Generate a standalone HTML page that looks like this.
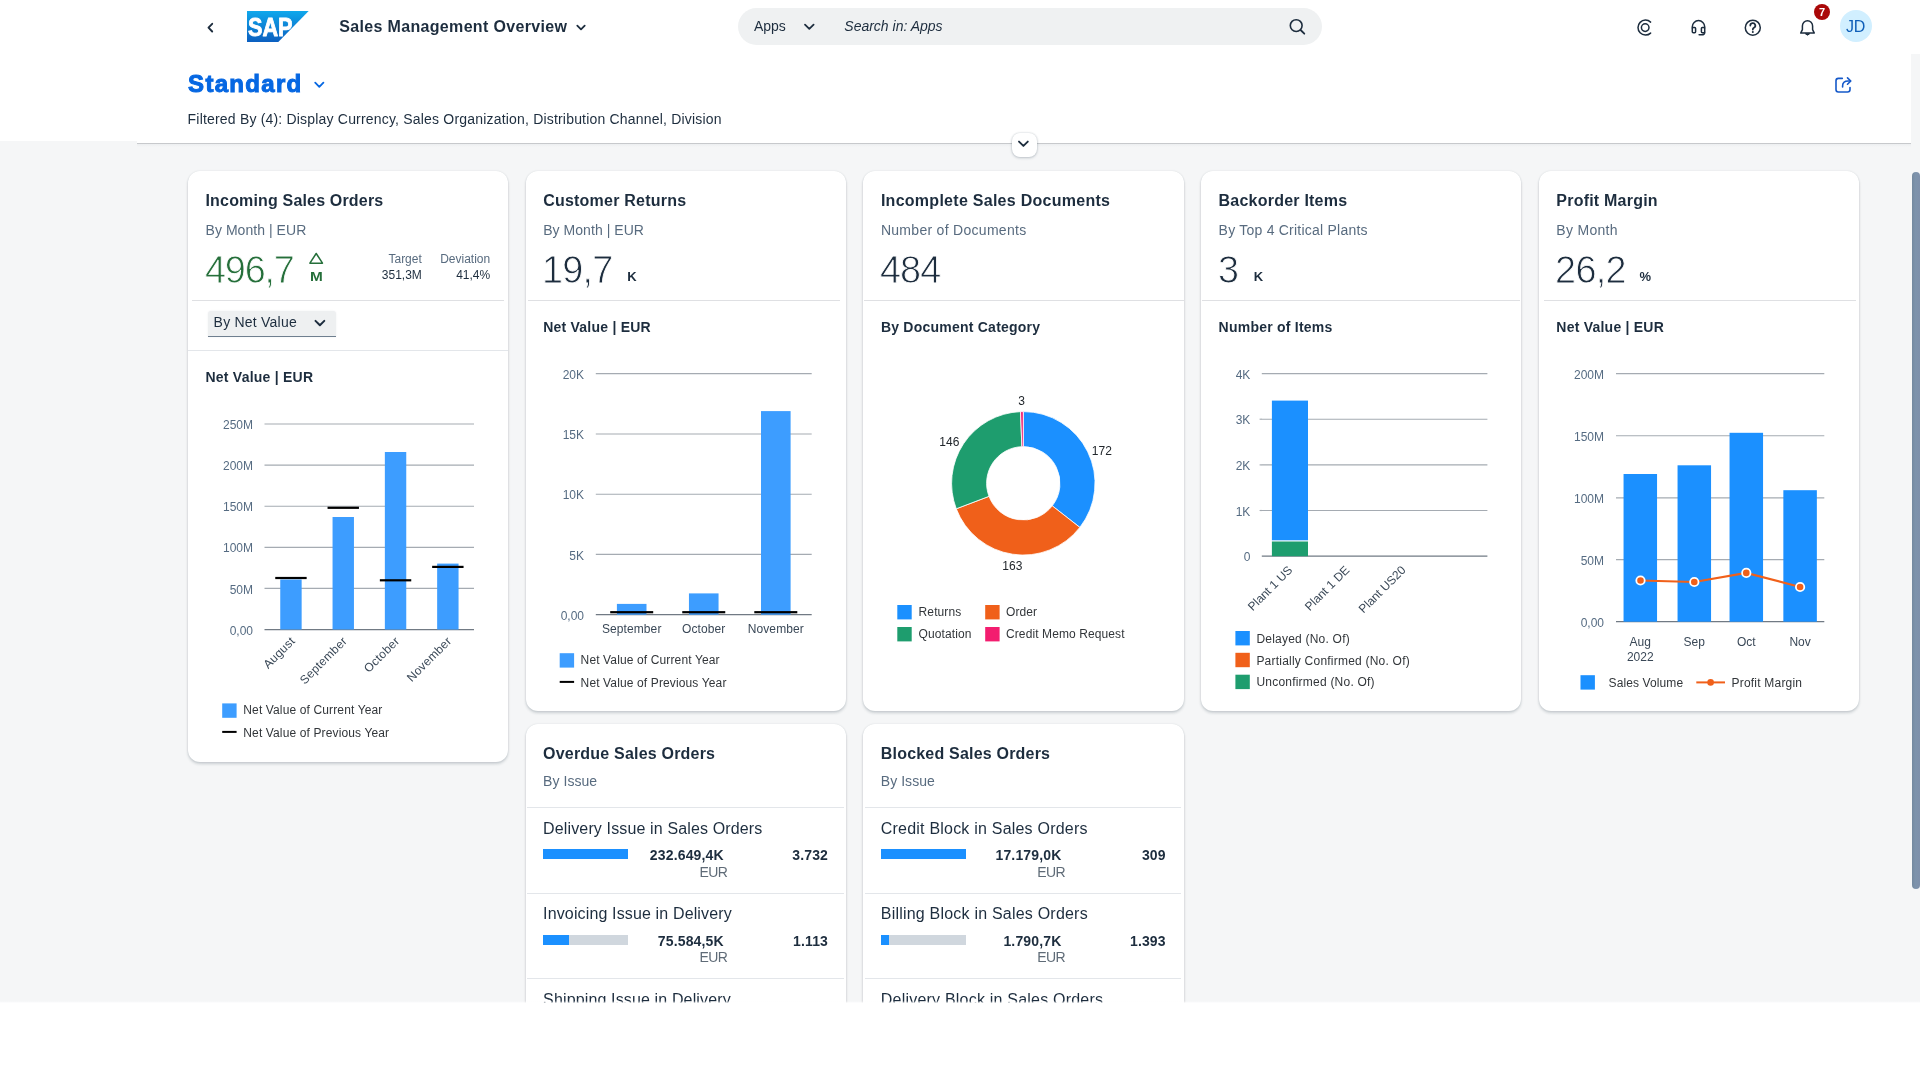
<!DOCTYPE html>
<html lang="en"><head><meta charset="utf-8"><title>Sales Management Overview</title>
<style>
html,body{margin:0;padding:0;overflow:hidden;}
body{width:1920px;height:1080px;overflow:hidden;background:#f5f6f7;position:relative;font-family:"Liberation Sans",sans-serif;}
.t{position:absolute;white-space:nowrap;}
.b{position:absolute;box-sizing:border-box;}
.card{position:absolute;box-sizing:border-box;background:#fff;border-radius:12px;box-shadow:0 0 2px rgba(34,53,72,.13),0 2px 3px rgba(34,53,72,.2);}
.hr{position:absolute;height:1px;background:#e3e6ea;}
svg{position:absolute;left:0;top:0;overflow:visible;}
.lt{-webkit-text-stroke:0.85px #fff;}
#root{position:absolute;left:0;top:0;width:1920px;height:1080px;overflow:hidden;will-change:transform;}
</style></head><body><div id="root">

<div class="b" style="left:0px;top:0px;width:1920px;height:141px;background:#fff;"></div>
<div class="b" style="left:137px;top:141px;width:1773.5px;height:2px;background:#fff;"></div>
<div class="b" style="left:1910.5px;top:53.7px;width:9.5px;height:100px;background:#f5f6f7;"></div>
<div class="b" style="left:137px;top:143px;width:1773.5px;height:1px;background:#c7c9cc;"></div>
<div class="b" style="left:137px;top:144px;width:1773.5px;height:3px;background:linear-gradient(#eceef0,#f5f6f7);"></div>
<div class="t" style="top:19.26px;font-size:16px;line-height:16px;color:#1d2d3e;font-weight:700;letter-spacing:0.33px;left:339.30px;">Sales Management Overview</div>
<div class="b" style="left:738px;top:8px;width:584px;height:37px;background:#eff1f2;border-radius:18.5px;"></div>
<div class="t" style="top:19.05px;font-size:14px;line-height:14px;color:#1d2d3e;left:753.90px;">Apps</div>
<div class="t" style="top:19.05px;font-size:14px;line-height:14px;color:#1d2d3e;left:844.30px;font-style:italic;">Search in: Apps</div>
<div class="b" style="left:1839.5px;top:10.3px;width:32px;height:32px;background:#d1efff;border-radius:50%;"></div>
<div class="t" style="top:18.76px;font-size:16px;line-height:16px;color:#0f5fb8;letter-spacing:-0.3px;left:1655.60px;width:400px;text-align:center;">JD</div>
<div class="b" style="left:1814px;top:4px;width:16px;height:16px;background:#aa0808;border-radius:50%;"></div>
<div class="t" style="top:6.59px;font-size:11px;line-height:11px;color:#fff;font-weight:700;left:1622.00px;width:400px;text-align:center;">7</div>
<div class="t" style="top:72.38px;font-size:24px;line-height:24px;color:#0667e2;font-weight:700;letter-spacing:1.3px;left:188.10px;-webkit-text-stroke:1px #0667e2;">Standard</div>
<div class="t" style="top:111.75px;font-size:14px;line-height:14px;color:#1d2d3e;letter-spacing:0.19px;left:187.60px;">Filtered By (4): Display Currency, Sales Organization, Distribution Channel, Division</div>
<div class="b" style="left:1011.5px;top:132.5px;width:25px;height:24px;background:#fff;border-radius:8px;box-shadow:0 0 2px rgba(34,53,72,.2),0 1px 3px rgba(34,53,72,.22);"></div>
<svg width="1920" height="160" viewBox="0 0 1920 160" fill="none" stroke-linecap="round" stroke-linejoin="round">
<defs><linearGradient id="sapg" x1="0" y1="0" x2="0" y2="1"><stop offset="0" stop-color="#0fa8ec"/><stop offset="1" stop-color="#0b5fc0"/></linearGradient></defs>
<!-- back -->
<path d="M212.2 23.8 L208.5 27.65 L212.2 31.5" stroke="#1d2d3e" stroke-width="1.9"/>
<!-- SAP logo -->
<path d="M247 11 H308.7 L278.3 42 H247 Z" fill="url(#sapg)"/>
<text x="248" y="36" font-family="Liberation Sans, sans-serif" font-weight="700" font-size="25.5" fill="#fff" stroke="#fff" stroke-width="0.9" textLength="44.5" lengthAdjust="spacingAndGlyphs">SAP</text>
<!-- title chevron -->
<path d="M577.3 25.6 L581 29.3 L584.7 25.6" stroke="#1d2d3e" stroke-width="1.8"/>
<!-- search: apps chevron + magnifier -->
<path d="M805 24.7 L809.3 28.9 L813.6 24.7" stroke="#1d2d3e" stroke-width="1.8"/>
<circle cx="1296.2" cy="25.6" r="5.9" stroke="#1d2d3e" stroke-width="1.6"/>
<path d="M1300.6 30 L1304.3 33.7" stroke="#1d2d3e" stroke-width="1.8"/>
<!-- joule / copilot -->
<circle cx="1645.2" cy="27.6" r="3.8" stroke="#1d2d3e" stroke-width="1.5"/>
<path d="M1650.6 22.1 A7.5 7.5 0 1 0 1650.6 33.1" stroke="#1d2d3e" stroke-width="1.5"/>
<!-- headset -->
<path d="M1692.3 28 v-1.2 a6.2 6.2 0 0 1 12.4 0 v1.2" stroke="#1d2d3e" stroke-width="1.5"/>
<rect x="1692.3" y="27.6" width="3.3" height="5.2" rx="1" stroke="#1d2d3e" stroke-width="1.5"/>
<rect x="1701.4" y="27.6" width="3.3" height="5.2" rx="1" stroke="#1d2d3e" stroke-width="1.5"/>
<path d="M1704.7 32.2 q0 2.6 -3 2.6 h-2.6" stroke="#1d2d3e" stroke-width="1.5"/>
<!-- help -->
<circle cx="1752.8" cy="27.7" r="7.5" stroke="#1d2d3e" stroke-width="1.5"/>
<path d="M1750.3 25.6 a2.5 2.5 0 1 1 3.6 2.2 q-1.1 .6 -1.1 1.7" stroke="#1d2d3e" stroke-width="1.75"/>
<circle cx="1752.8" cy="32" r="1" fill="#1d2d3e"/>
<!-- bell -->
<path d="M1800.7 33.1 H1814.3 L1812.6 29.6 V25.9 a5.1 5.1 0 0 0 -10.2 0 V29.6 Z" stroke="#1d2d3e" stroke-width="1.5"/>
<path d="M1805.6 34 q1.9 2.4 3.8 0 Z" fill="#1d2d3e" stroke="#1d2d3e" stroke-width="1"/>
<!-- variant chevron -->
<path d="M315.2 82.7 L319.3 86.8 L323.4 82.7" stroke="#0667e2" stroke-width="1.8"/>
<!-- share -->
<path d="M1842.3 78.4 H1838.4 a2.4 2.4 0 0 0 -2.4 2.4 V89.6 a2.4 2.4 0 0 0 2.4 2.4 H1847.6 a2.4 2.4 0 0 0 2.4 -2.4 V87.6" stroke="#1559c9" stroke-width="1.6"/>
<path d="M1842.6 87 v-1 q0 -5 5.6 -5 h2" stroke="#1559c9" stroke-width="1.6"/>
<path d="M1847.5 77.9 L1850.8 81 L1847.5 84.2" stroke="#1559c9" stroke-width="1.6"/>
<!-- collapse chevron -->
<path d="M1019 141.6 L1023.4 145.9 L1027.8 141.6" stroke="#1d2d3e" stroke-width="1.9"/>
</svg>

<div class="card" style="left:187.8px;top:171.2px;width:320.6px;height:590.4px;"></div>
<div class="card" style="left:525.5px;top:171.2px;width:320.6px;height:539.4px;"></div>
<div class="card" style="left:863.2px;top:171.2px;width:320.6px;height:539.4px;"></div>
<div class="card" style="left:1200.9px;top:171.2px;width:320.6px;height:539.4px;"></div>
<div class="card" style="left:1538.6px;top:171.2px;width:320.6px;height:539.4px;"></div>
<div class="card" style="left:525.5px;top:723.8px;width:320.6px;height:398.4px;"></div>
<div class="card" style="left:863.2px;top:723.8px;width:320.6px;height:398.4px;"></div>
<div class="t" style="top:193.16px;font-size:16px;line-height:16px;color:#1d2d3e;font-weight:700;letter-spacing:0.17px;left:205.50px;">Incoming Sales Orders</div>
<div class="t" style="top:222.55px;font-size:14px;line-height:14px;color:#586b7f;letter-spacing:0.05px;left:205.50px;">By Month | EUR</div>
<div class="hr" style="left:192px;top:300px;width:312px;background:#dfe0e3;"></div>
<div class="t" style="top:193.16px;font-size:16px;line-height:16px;color:#1d2d3e;font-weight:700;letter-spacing:0.22px;left:543.20px;">Customer Returns</div>
<div class="t" style="top:222.55px;font-size:14px;line-height:14px;color:#586b7f;letter-spacing:0.05px;left:543.20px;">By Month | EUR</div>
<div class="hr" style="left:527.9px;top:300px;width:312.1px;background:#dfe0e3;"></div>
<div class="t" style="top:193.16px;font-size:16px;line-height:16px;color:#1d2d3e;font-weight:700;letter-spacing:0.27px;left:880.90px;">Incomplete Sales Documents</div>
<div class="t" style="top:222.55px;font-size:14px;line-height:14px;color:#586b7f;letter-spacing:0.29px;left:880.90px;">Number of Documents</div>
<div class="hr" style="left:864.1px;top:300px;width:319.9px;background:#dfe0e3;"></div>
<div class="t" style="top:193.16px;font-size:16px;line-height:16px;color:#1d2d3e;font-weight:700;letter-spacing:0.22px;left:1218.60px;">Backorder Items</div>
<div class="t" style="top:222.55px;font-size:14px;line-height:14px;color:#586b7f;letter-spacing:0.23px;left:1218.60px;">By Top 4 Critical Plants</div>
<div class="hr" style="left:1202px;top:300px;width:317.9000000000001px;background:#dfe0e3;"></div>
<div class="t" style="top:193.16px;font-size:16px;line-height:16px;color:#1d2d3e;font-weight:700;letter-spacing:0.22px;left:1556.30px;">Profit Margin</div>
<div class="t" style="top:222.55px;font-size:14px;line-height:14px;color:#586b7f;letter-spacing:0.3px;left:1556.30px;">By Month</div>
<div class="hr" style="left:1544px;top:300px;width:312px;background:#dfe0e3;"></div>
<div class="t lt" style="top:250.60px;font-size:37.8px;line-height:37.8px;color:#256f3a;letter-spacing:-1.15px;left:204.90px;transform:scaleY(1.045);transform-origin:50% 0;">496,7</div>
<div class="t lt" style="top:250.60px;font-size:37.8px;line-height:37.8px;color:#1d2d3e;letter-spacing:-0.75px;left:541.90px;transform:scaleY(1.045);transform-origin:50% 0;">19,7</div>
<div class="t lt" style="top:250.60px;font-size:37.8px;line-height:37.8px;color:#1d2d3e;letter-spacing:-0.9px;left:879.90px;transform:scaleY(1.045);transform-origin:50% 0;">484</div>
<div class="t lt" style="top:250.60px;font-size:37.8px;line-height:37.8px;color:#1d2d3e;left:1217.90px;transform:scaleY(1.045);transform-origin:50% 0;">3</div>
<div class="t lt" style="top:250.60px;font-size:37.8px;line-height:37.8px;color:#1d2d3e;letter-spacing:-0.7px;left:1555.10px;transform:scaleY(1.045);transform-origin:50% 0;">26,2</div>
<div class="t" style="top:270.74px;font-size:12px;line-height:12px;color:#256f3a;font-weight:700;left:309.80px;transform:scaleX(1.28);transform-origin:0 50%;">M</div>
<div class="t" style="top:270.10px;font-size:13px;line-height:13px;color:#1d2d3e;font-weight:700;left:627.20px;">K</div>
<div class="t" style="top:270.10px;font-size:13px;line-height:13px;color:#1d2d3e;font-weight:700;left:1253.80px;">K</div>
<div class="t" style="top:270.10px;font-size:13px;line-height:13px;color:#1d2d3e;font-weight:700;left:1639.50px;">%</div>
<div class="t" style="top:253.14px;font-size:12px;line-height:12px;color:#586b7f;right:1498.20px;">Target</div>
<div class="t" style="top:269.44px;font-size:12px;line-height:12px;color:#1d2d3e;right:1498.20px;">351,3M</div>
<div class="t" style="top:253.14px;font-size:12px;line-height:12px;color:#586b7f;right:1429.80px;">Deviation</div>
<div class="t" style="top:269.44px;font-size:12px;line-height:12px;color:#1d2d3e;right:1429.80px;">41,4%</div>
<div class="b" style="left:208px;top:311.4px;width:127.8px;height:25.6px;background:#eef0f1;border-radius:3px 3px 0 0;border-bottom:1px solid #6f7f8f;box-shadow:0 0 2px rgba(34,53,72,.08);"></div>
<div class="t" style="top:315.25px;font-size:14px;line-height:14px;color:#1d2d3e;letter-spacing:0.22px;left:213.60px;">By Net Value</div>
<div class="hr" style="left:188px;top:350px;width:320.1px;background:#e3e6ea;"></div>
<div class="t" style="top:370.35px;font-size:14px;line-height:14px;color:#1d2d3e;font-weight:700;letter-spacing:0.23px;left:205.50px;">Net Value | EUR</div>
<div class="t" style="top:320.35px;font-size:14px;line-height:14px;color:#1d2d3e;font-weight:700;letter-spacing:0.23px;left:543.20px;">Net Value | EUR</div>
<div class="t" style="top:320.35px;font-size:14px;line-height:14px;color:#1d2d3e;font-weight:700;letter-spacing:0.23px;left:880.90px;">By Document Category</div>
<div class="t" style="top:320.35px;font-size:14px;line-height:14px;color:#1d2d3e;font-weight:700;letter-spacing:0.23px;left:1218.60px;">Number of Items</div>
<div class="t" style="top:320.35px;font-size:14px;line-height:14px;color:#1d2d3e;font-weight:700;letter-spacing:0.23px;left:1556.30px;">Net Value | EUR</div>
<div class="t" style="top:419.14px;font-size:12px;line-height:12px;color:#556b82;right:1667.00px;">250M</div>
<div class="t" style="top:460.24px;font-size:12px;line-height:12px;color:#556b82;right:1667.00px;">200M</div>
<div class="t" style="top:501.34px;font-size:12px;line-height:12px;color:#556b82;right:1667.00px;">150M</div>
<div class="t" style="top:542.44px;font-size:12px;line-height:12px;color:#556b82;right:1667.00px;">100M</div>
<div class="t" style="top:583.54px;font-size:12px;line-height:12px;color:#556b82;right:1667.00px;">50M</div>
<div class="t" style="top:624.64px;font-size:12px;line-height:12px;color:#556b82;right:1667.00px;">0,00</div>
<div class="t" style="right:1627.25px;top:633.30px;font-size:12px;line-height:12px;letter-spacing:0.25px;color:#3a4857;transform-origin:100% 50%;transform:rotate(-45deg);">August</div>
<div class="t" style="right:1574.95px;top:633.30px;font-size:12px;line-height:12px;letter-spacing:0.25px;color:#3a4857;transform-origin:100% 50%;transform:rotate(-45deg);">September</div>
<div class="t" style="right:1522.65px;top:633.30px;font-size:12px;line-height:12px;letter-spacing:0.25px;color:#3a4857;transform-origin:100% 50%;transform:rotate(-45deg);">October</div>
<div class="t" style="right:1470.35px;top:633.30px;font-size:12px;line-height:12px;letter-spacing:0.25px;color:#3a4857;transform-origin:100% 50%;transform:rotate(-45deg);">November</div>
<div class="t" style="top:704.44px;font-size:12px;line-height:12px;color:#32363a;letter-spacing:0.13px;left:243.30px;">Net Value of Current Year</div>
<div class="t" style="top:726.64px;font-size:12px;line-height:12px;color:#32363a;letter-spacing:0.13px;left:243.30px;">Net Value of Previous Year</div>
<div class="t" style="top:368.74px;font-size:12px;line-height:12px;color:#556b82;right:1336.00px;">20K</div>
<div class="t" style="top:429.14px;font-size:12px;line-height:12px;color:#556b82;right:1336.00px;">15K</div>
<div class="t" style="top:489.34px;font-size:12px;line-height:12px;color:#556b82;right:1336.00px;">10K</div>
<div class="t" style="top:549.54px;font-size:12px;line-height:12px;color:#556b82;right:1336.00px;">5K</div>
<div class="t" style="top:609.84px;font-size:12px;line-height:12px;color:#556b82;right:1336.00px;">0,00</div>
<div class="t" style="top:623.24px;font-size:12px;line-height:12px;color:#3a4857;letter-spacing:0.1px;left:431.70px;width:400px;text-align:center;">September</div>
<div class="t" style="top:623.24px;font-size:12px;line-height:12px;color:#3a4857;letter-spacing:0.1px;left:503.75px;width:400px;text-align:center;">October</div>
<div class="t" style="top:623.24px;font-size:12px;line-height:12px;color:#3a4857;letter-spacing:0.1px;left:575.80px;width:400px;text-align:center;">November</div>
<div class="t" style="top:654.24px;font-size:12px;line-height:12px;color:#32363a;letter-spacing:0.13px;left:580.60px;">Net Value of Current Year</div>
<div class="t" style="top:676.54px;font-size:12px;line-height:12px;color:#32363a;letter-spacing:0.13px;left:580.60px;">Net Value of Previous Year</div>
<div class="t" style="top:395.04px;font-size:12px;line-height:12px;color:#22272c;left:821.70px;width:400px;text-align:center;">3</div>
<div class="t" style="top:445.24px;font-size:12px;line-height:12px;color:#22272c;left:901.80px;width:400px;text-align:center;">172</div>
<div class="t" style="top:436.04px;font-size:12px;line-height:12px;color:#22272c;left:749.30px;width:400px;text-align:center;">146</div>
<div class="t" style="top:559.94px;font-size:12px;line-height:12px;color:#22272c;left:812.30px;width:400px;text-align:center;">163</div>
<div class="t" style="top:606.14px;font-size:12px;line-height:12px;color:#32363a;letter-spacing:0.1px;left:918.60px;">Returns</div>
<div class="t" style="top:606.14px;font-size:12px;line-height:12px;color:#32363a;letter-spacing:0.1px;left:1006.00px;">Order</div>
<div class="t" style="top:628.14px;font-size:12px;line-height:12px;color:#32363a;letter-spacing:0.1px;left:918.60px;">Quotation</div>
<div class="t" style="top:628.14px;font-size:12px;line-height:12px;color:#32363a;letter-spacing:0.1px;left:1006.00px;">Credit Memo Request</div>
<div class="t" style="top:368.74px;font-size:12px;line-height:12px;color:#556b82;right:669.70px;">4K</div>
<div class="t" style="top:414.34px;font-size:12px;line-height:12px;color:#556b82;right:669.70px;">3K</div>
<div class="t" style="top:460.04px;font-size:12px;line-height:12px;color:#556b82;right:669.70px;">2K</div>
<div class="t" style="top:505.64px;font-size:12px;line-height:12px;color:#556b82;right:669.70px;">1K</div>
<div class="t" style="top:551.34px;font-size:12px;line-height:12px;color:#556b82;right:669.70px;">0</div>
<div class="t" style="right:629.20px;top:562.00px;font-size:12px;line-height:12px;letter-spacing:0px;color:#3a4857;transform-origin:100% 50%;transform:rotate(-45deg);">Plant 1 US</div>
<div class="t" style="right:572.80px;top:562.00px;font-size:12px;line-height:12px;letter-spacing:0px;color:#3a4857;transform-origin:100% 50%;transform:rotate(-45deg);">Plant 1 DE</div>
<div class="t" style="right:516.40px;top:562.00px;font-size:12px;line-height:12px;letter-spacing:0px;color:#3a4857;transform-origin:100% 50%;transform:rotate(-45deg);">Plant US20</div>
<div class="t" style="top:632.74px;font-size:12px;line-height:12px;color:#32363a;letter-spacing:0.22px;left:1256.40px;">Delayed (No. Of)</div>
<div class="t" style="top:654.54px;font-size:12px;line-height:12px;color:#32363a;letter-spacing:0.22px;left:1256.40px;">Partially Confirmed (No. Of)</div>
<div class="t" style="top:676.44px;font-size:12px;line-height:12px;color:#32363a;letter-spacing:0.22px;left:1256.40px;">Unconfirmed (No. Of)</div>
<div class="t" style="top:368.74px;font-size:12px;line-height:12px;color:#556b82;right:316.00px;">200M</div>
<div class="t" style="top:430.84px;font-size:12px;line-height:12px;color:#556b82;right:316.00px;">150M</div>
<div class="t" style="top:492.94px;font-size:12px;line-height:12px;color:#556b82;right:316.00px;">100M</div>
<div class="t" style="top:554.74px;font-size:12px;line-height:12px;color:#556b82;right:316.00px;">50M</div>
<div class="t" style="top:616.84px;font-size:12px;line-height:12px;color:#556b82;right:316.00px;">0,00</div>
<div class="t" style="top:635.54px;font-size:12px;line-height:12px;color:#3a4857;left:1440.30px;width:400px;text-align:center;">Aug</div>
<div class="t" style="top:635.54px;font-size:12px;line-height:12px;color:#3a4857;left:1494.30px;width:400px;text-align:center;">Sep</div>
<div class="t" style="top:635.54px;font-size:12px;line-height:12px;color:#3a4857;left:1546.30px;width:400px;text-align:center;">Oct</div>
<div class="t" style="top:635.54px;font-size:12px;line-height:12px;color:#3a4857;left:1600.10px;width:400px;text-align:center;">Nov</div>
<div class="t" style="top:650.64px;font-size:12px;line-height:12px;color:#3a4857;left:1440.30px;width:400px;text-align:center;">2022</div>
<div class="t" style="top:677.04px;font-size:12px;line-height:12px;color:#32363a;letter-spacing:0.1px;left:1608.60px;">Sales Volume</div>
<div class="t" style="top:677.04px;font-size:12px;line-height:12px;color:#32363a;letter-spacing:0.21px;left:1731.50px;">Profit Margin</div>
<svg width="1920" height="1080" viewBox="0 0 1920 1080"><path d="M264.5 424 H474" stroke="#a5abb2" stroke-width="1.15"/>
<path d="M264.5 465.1 H474" stroke="#a5abb2" stroke-width="1.15"/>
<path d="M264.5 506.2 H474" stroke="#a5abb2" stroke-width="1.15"/>
<path d="M264.5 547.3 H474" stroke="#a5abb2" stroke-width="1.15"/>
<path d="M264.5 588.4 H474" stroke="#a5abb2" stroke-width="1.15"/>
<path d="M264.5 629.5 H474" stroke="#717a84" stroke-width="1.25"/>
<rect x="280.25" y="579.5" width="21.4" height="50.00" fill="#3d9dff"/>
<rect x="332.55" y="517" width="21.4" height="112.50" fill="#3d9dff"/>
<rect x="384.85" y="452" width="21.4" height="177.50" fill="#3d9dff"/>
<rect x="437.15" y="563.6" width="21.4" height="65.90" fill="#3d9dff"/>
<rect x="275.25" y="576.90" width="31.4" height="2.2" fill="#000"/>
<rect x="327.55" y="506.70" width="31.4" height="2.2" fill="#000"/>
<rect x="379.85" y="579.20" width="31.4" height="2.2" fill="#000"/>
<rect x="432.15" y="565.80" width="31.4" height="2.2" fill="#000"/>
<rect x="222.2" y="703.4" width="14.4" height="14.4" fill="#3d9dff"/>
<rect x="222.2" y="730.9" width="14.4" height="2" fill="#000"/>
<path d="M595.8 373.6 H811.7" stroke="#a5abb2" stroke-width="1.15"/>
<path d="M595.8 434 H811.7" stroke="#a5abb2" stroke-width="1.15"/>
<path d="M595.8 494.2 H811.7" stroke="#a5abb2" stroke-width="1.15"/>
<path d="M595.8 554.4 H811.7" stroke="#a5abb2" stroke-width="1.15"/>
<path d="M595.8 614.7 H811.7" stroke="#717a84" stroke-width="1.25"/>
<rect x="616.90" y="603.9" width="29.6" height="10.80" fill="#3d9dff"/>
<rect x="688.95" y="593.4" width="29.6" height="21.30" fill="#3d9dff"/>
<rect x="761.00" y="411.1" width="29.6" height="203.60" fill="#3d9dff"/>
<rect x="610.20" y="611.1" width="43" height="2.2" fill="#000"/>
<rect x="682.25" y="611.1" width="43" height="2.2" fill="#000"/>
<rect x="754.30" y="611.1" width="43" height="2.2" fill="#000"/>
<rect x="559.7" y="653.2" width="14.4" height="14.4" fill="#3d9dff"/>
<rect x="559.7" y="680.9" width="14.4" height="2" fill="#000"/>
<path d="M1023.30 411.60 A71.7 71.7 0 0 1 1079.85 527.38 L1052.25 505.86 A36.7 36.7 0 0 0 1023.30 446.60 Z" fill="#1b90ff" stroke="#fff" stroke-width="0.8"/>
<path d="M1079.85 527.38 A71.7 71.7 0 0 1 956.28 508.79 L989.00 496.35 A36.7 36.7 0 0 0 1052.25 505.86 Z" fill="#f0601a" stroke="#fff" stroke-width="0.8"/>
<path d="M956.28 508.79 A71.7 71.7 0 0 1 1020.51 411.65 L1021.87 446.63 A36.7 36.7 0 0 0 989.00 496.35 Z" fill="#1e9d6e" stroke="#fff" stroke-width="0.8"/>
<path d="M1020.51 411.65 A71.7 71.7 0 0 1 1023.30 411.60 L1023.30 446.60 A36.7 36.7 0 0 0 1021.87 446.63 Z" fill="#f31d6f" stroke="#fff" stroke-width="0.8"/>
<rect x="897.3" y="605" width="14.4" height="14.4" fill="#1b90ff"/>
<rect x="985.2" y="605" width="14.4" height="14.4" fill="#f0601a"/>
<rect x="897.3" y="627" width="14.4" height="14.4" fill="#1e9d6e"/>
<rect x="985.2" y="627" width="14.4" height="14.4" fill="#f31d6f"/>
<path d="M1261.8 373.6 H1487.4" stroke="#a5abb2" stroke-width="1.15"/>
<path d="M1261.8 419.2 H1487.4" stroke="#a5abb2" stroke-width="1.15"/>
<path d="M1261.8 464.9 H1487.4" stroke="#a5abb2" stroke-width="1.15"/>
<path d="M1261.8 510.5 H1487.4" stroke="#a5abb2" stroke-width="1.15"/>
<path d="M1261.8 556.2 H1487.4" stroke="#717a84" stroke-width="1.25"/>
<path d="M1259.6 419.2 H1262" stroke="#a5abb2" stroke-width="1.15"/>
<path d="M1259.6 464.9 H1262" stroke="#a5abb2" stroke-width="1.15"/>
<path d="M1259.6 510.5 H1262" stroke="#a5abb2" stroke-width="1.15"/>
<rect x="1271.9" y="400.6" width="36.1" height="139.70" fill="#1b90ff"/>
<rect x="1271.9" y="541.5" width="36.1" height="14.70" fill="#1e9d6e"/>
<rect x="1235.4" y="631" width="14.4" height="14.4" fill="#1b90ff"/>
<rect x="1235.4" y="652.8" width="14.4" height="14.4" fill="#f0601a"/>
<rect x="1235.4" y="674.7" width="14.4" height="14.4" fill="#1e9d6e"/>
<path d="M1616 373.6 H1824.3" stroke="#a5abb2" stroke-width="1.15"/>
<path d="M1616 435.7 H1824.3" stroke="#a5abb2" stroke-width="1.15"/>
<path d="M1616 497.8 H1824.3" stroke="#a5abb2" stroke-width="1.15"/>
<path d="M1616 559.6 H1824.3" stroke="#a5abb2" stroke-width="1.15"/>
<path d="M1616 621.7 H1824.3" stroke="#717a84" stroke-width="1.25"/>
<rect x="1623.55" y="474" width="33.5" height="147.70" fill="#1b90ff"/>
<rect x="1677.55" y="465.3" width="33.5" height="156.40" fill="#1b90ff"/>
<rect x="1729.55" y="432.8" width="33.5" height="188.90" fill="#1b90ff"/>
<rect x="1783.35" y="490.2" width="33.5" height="131.50" fill="#1b90ff"/>
<polyline points="1640.5,580.5 1694.3,582 1746.3,572.9 1800.1,587" fill="none" stroke="#f0601a" stroke-width="2.2"/>
<circle cx="1640.5" cy="580.5" r="4.2" fill="#f0601a" stroke="#fff" stroke-width="1.8"/>
<circle cx="1694.3" cy="582" r="4.2" fill="#f0601a" stroke="#fff" stroke-width="1.8"/>
<circle cx="1746.3" cy="572.9" r="4.2" fill="#f0601a" stroke="#fff" stroke-width="1.8"/>
<circle cx="1800.1" cy="587" r="4.2" fill="#f0601a" stroke="#fff" stroke-width="1.8"/>
<rect x="1580.5" y="675.2" width="14.4" height="14.4" fill="#1b90ff"/>
<path d="M1696.3 682.4 H1725" stroke="#f0601a" stroke-width="2"/><circle cx="1710.6" cy="682.4" r="3.3" fill="#f0601a"/>
<path d="M316.2 253.5 L322.5 263.2 H309.9 Z" fill="none" stroke="#256f3a" stroke-width="1.5" stroke-linejoin="round"/>
<path d="M315.5 320.9 L319.9 325.2 L324.3 320.9" fill="none" stroke="#1d2d3e" stroke-width="2" stroke-linecap="round" stroke-linejoin="round"/></svg>
<div class="t" style="top:745.96px;font-size:16px;line-height:16px;color:#1d2d3e;font-weight:700;letter-spacing:0.2px;left:543.10px;">Overdue Sales Orders</div>
<div class="t" style="top:774.15px;font-size:14px;line-height:14px;color:#586b7f;letter-spacing:0.05px;left:543.10px;">By Issue</div>
<div class="hr" style="left:527.2px;top:807px;width:316.6px;background:#e3e6ea;"></div>
<div class="t" style="top:820.56px;font-size:16px;line-height:16px;color:#1d2d3e;letter-spacing:0.14px;left:543.10px;">Delivery Issue in Sales Orders</div>
<div class="b" style="left:543.1px;top:848.8px;width:85px;height:10.4px;background:#d0d7de;"></div>
<div class="b" style="left:543.1px;top:848.8px;width:85px;height:10.4px;background:#1b90ff;"></div>
<div class="t" style="top:847.85px;font-size:14px;line-height:14px;color:#1d2d3e;font-weight:700;letter-spacing:0.15px;right:1196.40px;margin-right:-0.15px;">232.649,4K</div>
<div class="t" style="top:864.55px;font-size:14px;line-height:14px;color:#5f6b77;letter-spacing:-0.6px;right:1192.10px;margin-right:0.6px;">EUR</div>
<div class="t" style="top:847.85px;font-size:14px;line-height:14px;color:#1d2d3e;font-weight:700;letter-spacing:0.15px;right:1092.10px;margin-right:-0.15px;">3.732</div>
<div class="hr" style="left:527.2px;top:892.5px;width:316.6px;background:#e3e6ea;"></div>
<div class="t" style="top:906.36px;font-size:16px;line-height:16px;color:#1d2d3e;letter-spacing:0.14px;left:543.10px;">Invoicing Issue in Delivery</div>
<div class="b" style="left:543.1px;top:934.5999999999999px;width:85px;height:10.4px;background:#d0d7de;"></div>
<div class="b" style="left:543.1px;top:934.5999999999999px;width:26.1px;height:10.4px;background:#1b90ff;"></div>
<div class="t" style="top:933.65px;font-size:14px;line-height:14px;color:#1d2d3e;font-weight:700;letter-spacing:0.15px;right:1196.40px;margin-right:-0.15px;">75.584,5K</div>
<div class="t" style="top:950.35px;font-size:14px;line-height:14px;color:#5f6b77;letter-spacing:-0.6px;right:1192.10px;margin-right:0.6px;">EUR</div>
<div class="t" style="top:933.65px;font-size:14px;line-height:14px;color:#1d2d3e;font-weight:700;letter-spacing:0.15px;right:1092.10px;margin-right:-0.15px;">1.113</div>
<div class="hr" style="left:527.2px;top:978.3px;width:316.6px;background:#e3e6ea;"></div>
<div class="t" style="top:992.16px;font-size:16px;line-height:16px;color:#1d2d3e;letter-spacing:0.14px;left:543.10px;">Shipping Issue in Delivery</div>
<div class="b" style="left:543.1px;top:1020.4px;width:85px;height:10.4px;background:#d0d7de;"></div>
<div class="b" style="left:543.1px;top:1020.4px;width:8.5px;height:10.4px;background:#1b90ff;"></div>
<div class="t" style="top:1019.45px;font-size:14px;line-height:14px;color:#1d2d3e;font-weight:700;letter-spacing:0.15px;right:1196.40px;margin-right:-0.15px;"></div>
<div class="t" style="top:1036.15px;font-size:14px;line-height:14px;color:#5f6b77;letter-spacing:-0.6px;right:1192.10px;margin-right:0.6px;">EUR</div>
<div class="t" style="top:1019.45px;font-size:14px;line-height:14px;color:#1d2d3e;font-weight:700;letter-spacing:0.15px;right:1092.10px;margin-right:-0.15px;"></div>
<div class="hr" style="left:527.2px;top:1064.1px;width:316.6px;background:#e3e6ea;"></div>
<div class="t" style="top:745.96px;font-size:16px;line-height:16px;color:#1d2d3e;font-weight:700;letter-spacing:0.2px;left:880.80px;">Blocked Sales Orders</div>
<div class="t" style="top:774.15px;font-size:14px;line-height:14px;color:#586b7f;letter-spacing:0.05px;left:880.80px;">By Issue</div>
<div class="hr" style="left:864.9px;top:807px;width:316.6px;background:#e3e6ea;"></div>
<div class="t" style="top:820.56px;font-size:16px;line-height:16px;color:#1d2d3e;letter-spacing:0.21px;left:880.80px;">Credit Block in Sales Orders</div>
<div class="b" style="left:880.8px;top:848.8px;width:85px;height:10.4px;background:#d0d7de;"></div>
<div class="b" style="left:880.8px;top:848.8px;width:85px;height:10.4px;background:#1b90ff;"></div>
<div class="t" style="top:847.85px;font-size:14px;line-height:14px;color:#1d2d3e;font-weight:700;letter-spacing:0.15px;right:858.70px;margin-right:-0.15px;">17.179,0K</div>
<div class="t" style="top:864.55px;font-size:14px;line-height:14px;color:#5f6b77;letter-spacing:-0.6px;right:854.40px;margin-right:0.6px;">EUR</div>
<div class="t" style="top:847.85px;font-size:14px;line-height:14px;color:#1d2d3e;font-weight:700;letter-spacing:0.15px;right:754.40px;margin-right:-0.15px;">309</div>
<div class="hr" style="left:864.9px;top:892.5px;width:316.6px;background:#e3e6ea;"></div>
<div class="t" style="top:906.36px;font-size:16px;line-height:16px;color:#1d2d3e;letter-spacing:0.21px;left:880.80px;">Billing Block in Sales Orders</div>
<div class="b" style="left:880.8px;top:934.5999999999999px;width:85px;height:10.4px;background:#d0d7de;"></div>
<div class="b" style="left:880.8px;top:934.5999999999999px;width:8.5px;height:10.4px;background:#1b90ff;"></div>
<div class="t" style="top:933.65px;font-size:14px;line-height:14px;color:#1d2d3e;font-weight:700;letter-spacing:0.15px;right:858.70px;margin-right:-0.15px;">1.790,7K</div>
<div class="t" style="top:950.35px;font-size:14px;line-height:14px;color:#5f6b77;letter-spacing:-0.6px;right:854.40px;margin-right:0.6px;">EUR</div>
<div class="t" style="top:933.65px;font-size:14px;line-height:14px;color:#1d2d3e;font-weight:700;letter-spacing:0.15px;right:754.40px;margin-right:-0.15px;">1.393</div>
<div class="hr" style="left:864.9px;top:978.3px;width:316.6px;background:#e3e6ea;"></div>
<div class="t" style="top:992.16px;font-size:16px;line-height:16px;color:#1d2d3e;letter-spacing:0.21px;left:880.80px;">Delivery Block in Sales Orders</div>
<div class="b" style="left:880.8px;top:1020.4px;width:85px;height:10.4px;background:#d0d7de;"></div>
<div class="b" style="left:880.8px;top:1020.4px;width:4.2px;height:10.4px;background:#1b90ff;"></div>
<div class="t" style="top:1019.45px;font-size:14px;line-height:14px;color:#1d2d3e;font-weight:700;letter-spacing:0.15px;right:858.70px;margin-right:-0.15px;"></div>
<div class="t" style="top:1036.15px;font-size:14px;line-height:14px;color:#5f6b77;letter-spacing:-0.6px;right:854.40px;margin-right:0.6px;">EUR</div>
<div class="t" style="top:1019.45px;font-size:14px;line-height:14px;color:#1d2d3e;font-weight:700;letter-spacing:0.15px;right:754.40px;margin-right:-0.15px;"></div>
<div class="hr" style="left:864.9px;top:1064.1px;width:316.6px;background:#e3e6ea;"></div>
<div class="b" style="left:0px;top:1000.5px;width:1920px;height:2.5px;background:linear-gradient(rgba(255,255,255,0),rgba(255,255,255,.9));"></div>
<div class="b" style="left:0px;top:1003px;width:1920px;height:77px;background:#fff;"></div>
<div class="b" style="left:1911.8px;top:171.6px;width:8.2px;height:717.4px;background:linear-gradient(90deg,#74899f,#7d93ac 40%,#7e90ab);border-radius:4.1px;"></div>
</div></body></html>
